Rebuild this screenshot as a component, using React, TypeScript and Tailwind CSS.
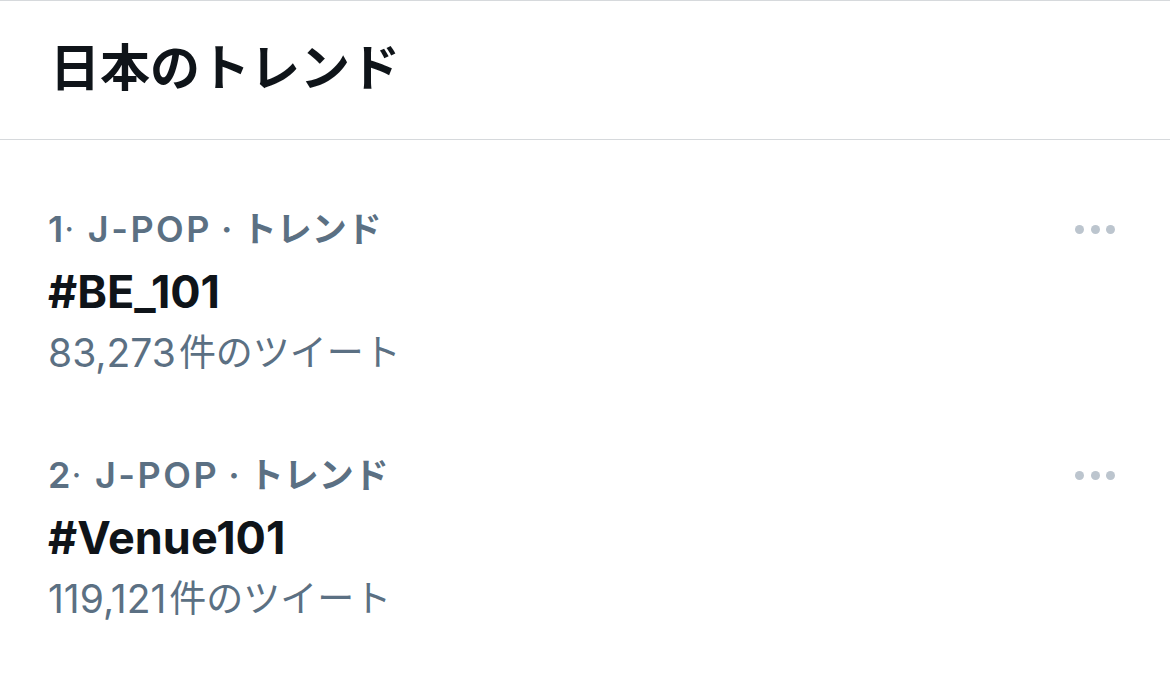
const FONT = "font-['Inter','Noto_Sans_CJK_JP',sans-serif]";

interface Trend {
  rank: number;
  category: string;
  name: string;
  count: string;
}

const TRENDS: Trend[] = [
  { rank: 1, category: 'J-POP', name: '#BE_101', count: '83,273' },
  { rank: 2, category: 'J-POP', name: '#Venue101', count: '119,121' },
];

function MoreDots() {
  return (
    <div className="flex items-center gap-[6.5px]">
      <span className="w-[9px] h-[9px] rounded-full bg-[#bcc5ce]" />
      <span className="w-[9px] h-[9px] rounded-full bg-[#bcc5ce]" />
      <span className="w-[9px] h-[9px] rounded-full bg-[#bcc5ce]" />
    </div>
  );
}

function TrendRow({ trend }: { trend: Trend }) {
  return (
    <div className="py-[31px] pl-12 pr-[55px]">
      <div className="flex items-center justify-between h-[62px]">
        <p className="h-[62px] flex items-center font-semibold text-[#5b7083] whitespace-pre">
          <span className="text-[36px] tracking-[1.5px]">{trend.rank}</span>
          <span className="text-[28px]">{'·  '}</span>
          <span className="text-[36px] tracking-[2.5px]">{trend.category}</span>
          <span className="text-[36px]">{' · '}</span>
          <span className="text-[35px]">トレンド</span>
        </p>
        <MoreDots />
      </div>
      <p className="h-[64px] text-[45px] font-bold text-[#0f1419] leading-[64px]">{trend.name}</p>
      <p className="h-[58px] flex items-center text-[#5b7083]">
        <span className="text-[39px]">{trend.count}</span>
        <span className="text-[37px] ml-[3px]">件のツイート</span>
      </p>
    </div>
  );
}

export default function App() {
  return (
    <div className={`w-[1170px] h-[674px] bg-white overflow-hidden ${FONT}`}>
      <div className="h-[140px] border-t border-b border-[#d6d9dc] flex items-center pl-[50px] pb-1">
        <h1 className="text-[50px] font-bold text-[#0f1419] leading-none">日本のトレンド</h1>
      </div>
      <div className="pt-[27px]">
        {TRENDS.map(t => (
          <TrendRow key={t.rank} trend={t} />
        ))}
      </div>
    </div>
  );
}
